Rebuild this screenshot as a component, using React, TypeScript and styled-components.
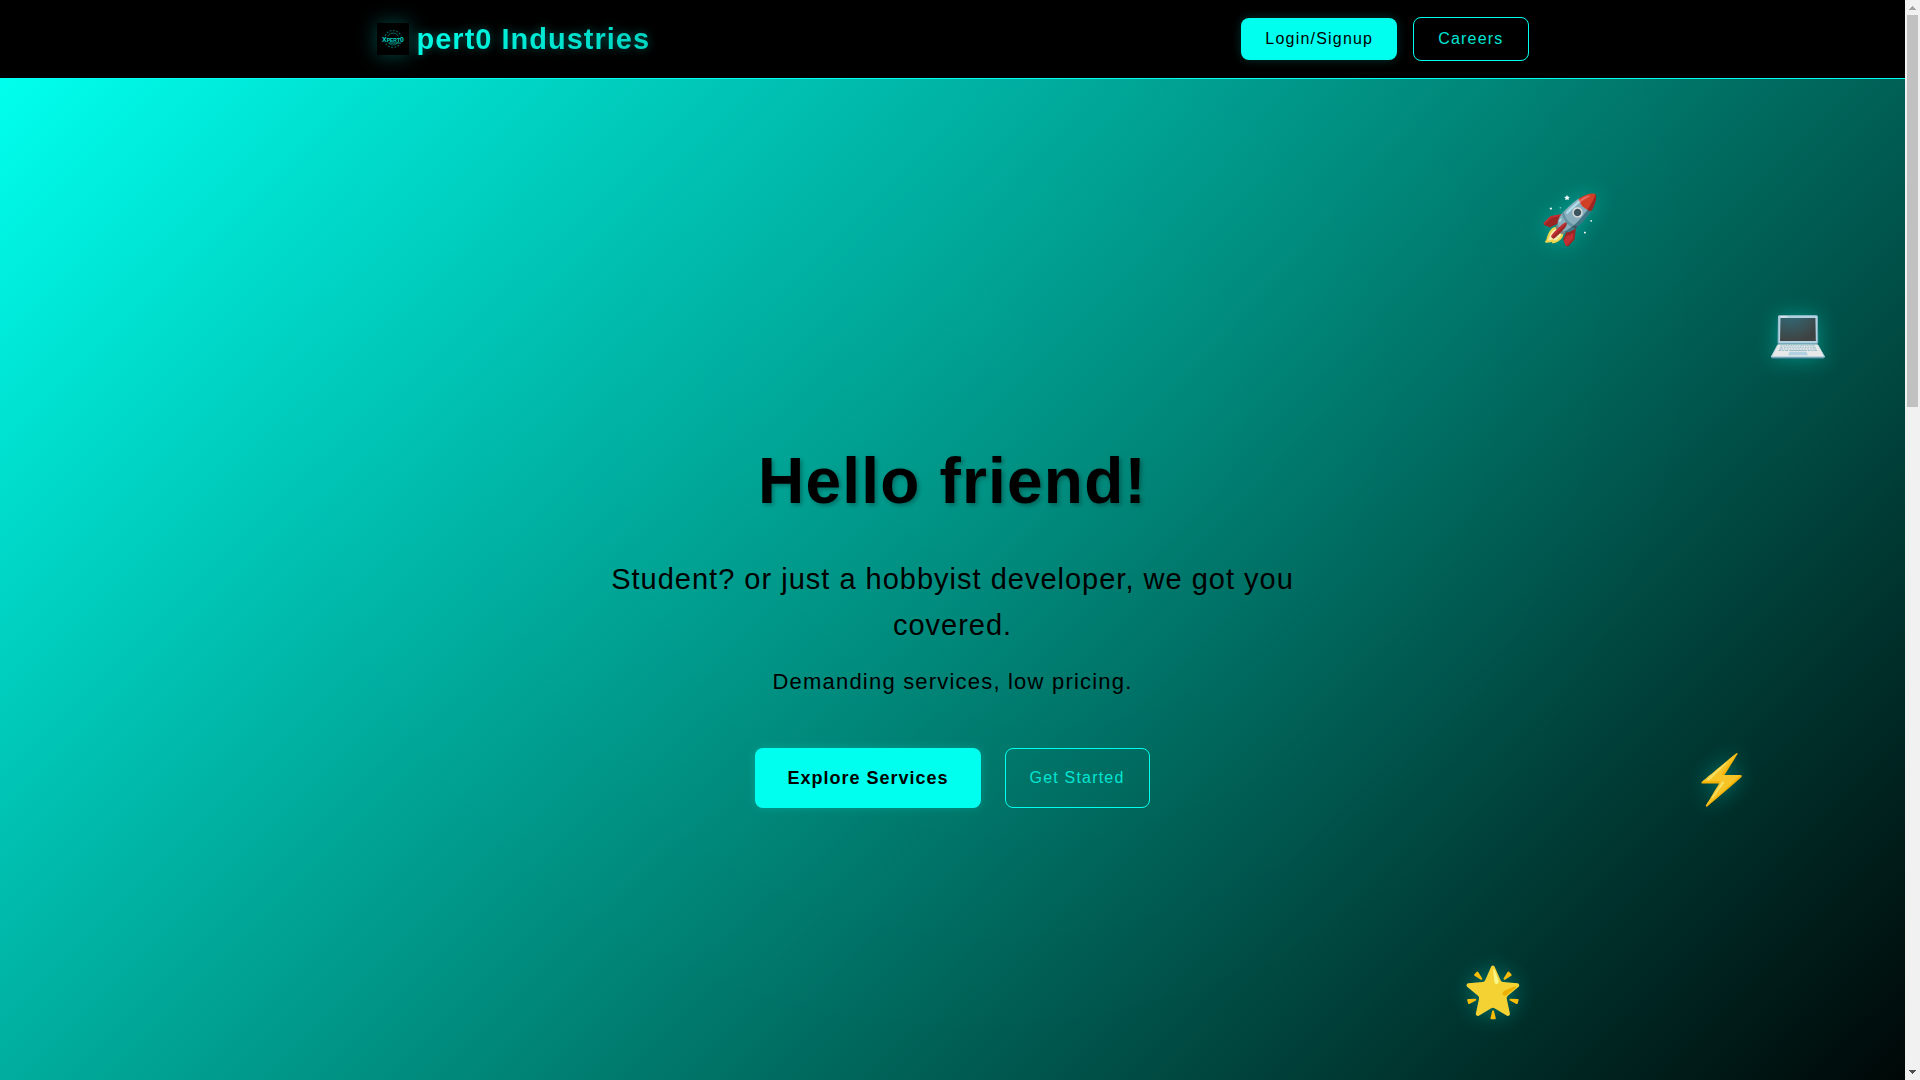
import React from "react";
import styled, { createGlobalStyle, css } from "styled-components";

const aqua = "#00ffee";
const sans = '"Liberation Sans", Arial, "Noto Color Emoji", sans-serif';

const GlobalStyle = createGlobalStyle`
  *, *::before, *::after { box-sizing: border-box; }
  body { margin: 0; background: #000; font-family: ${sans}; line-height: 1.6; letter-spacing: 0.075em; }
  h1, p { margin: 0; }
`;

const Shell = styled.div`
  display: grid;
  grid-template-columns: 1fr 15px;
  height: 100vh;
  overflow: hidden;
`;

const Page = styled.div`
  display: flex;
  flex-direction: column;
  min-width: 0;
  overflow: hidden;
`;

const Header = styled.header`
  flex: none;
  background: #000;
  border-bottom: 1px solid ${aqua};
`;

const HeaderInner = styled.div`
  display: flex;
  align-items: center;
  justify-content: space-between;
  max-width: 1200px;
  margin: 0 auto;
  padding: 16px 24px;
`;

const Brand = styled.a`
  display: flex;
  align-items: center;
  gap: 8px;
  font-size: 29px;
  line-height: 46px;
  font-weight: 700;
  letter-spacing: 1px;
  text-decoration: none;
`;

const BrandMark = styled.svg`
  display: block;
  width: 32px;
  height: 32px;
  background: #000;
  box-shadow: 0 0 20px rgba(0, 255, 238, 0.3);
`;

const BrandName = styled.span`
  color: transparent;
  background: linear-gradient(135deg, #00ffe8, #00d2c0);
  background-clip: text;
  -webkit-background-clip: text;
  filter: drop-shadow(0 0 5px rgba(0, 255, 238, 0.35));
`;

const Nav = styled.nav`
  display: flex;
  align-items: center;
  gap: 16px;
`;

const Button = styled.button<{ $kind: "solid" | "outline"; $large?: boolean }>`
  padding: 12px 24px;
  border: 0;
  border-radius: 8px;
  font-family: ${sans};
  font-size: 16px;
  line-height: 18px;
  letter-spacing: 0.075em;
  cursor: pointer;
  ${({ $kind }) =>
    $kind === "solid"
      ? css`
          background: ${aqua};
          color: #000;
          box-shadow: 0 0 10px rgba(0, 255, 238, 0.2);
        `
      : css`
          background: transparent;
          color: #00e5d4;
          border: 1px solid ${aqua};
        `}
  ${({ $large }) =>
    $large &&
    css`
      padding: 20px 32px;
      font-size: 18px;
      line-height: 20px;
      font-weight: 700;
      letter-spacing: 1px;
    `}
`;

const Hero = styled.main`
  position: relative;
  flex: none;
  display: flex;
  align-items: center;
  justify-content: center;
  min-height: 100vh;
  background:
    radial-gradient(circle at 50% 20%, rgba(0, 255, 238, 0.06) 0%, transparent 60%),
    linear-gradient(135deg, ${aqua} 0%, #008577 50%, #000 100%);
`;

const HeroContent = styled.div`
  max-width: 800px;
  text-align: center;
  color: #000;
`;

const Title = styled.h1`
  margin-bottom: 24px;
  font-size: 64px;
  line-height: 102px;
  text-shadow: 2px 2px 4px rgba(0, 0, 0, 0.3);
`;

const Lead = styled.p`
  margin-bottom: 16px;
  font-size: 29px;
  line-height: 46px;
  letter-spacing: 1px;
`;

const Tagline = styled.p`
  margin-bottom: 48px;
  font-size: 22px;
  line-height: 36px;
`;

const Actions = styled.div`
  display: flex;
  justify-content: center;
  gap: 24px;
`;

const FloatingLayer = styled.div`
  position: absolute;
  inset: 0 0 0 60%;
  pointer-events: none;
`;

const Floating = styled.span<{ $top: number; $right: number }>`
  position: absolute;
  top: ${({ $top }) => $top}%;
  right: ${({ $right }) => $right}%;
  font-size: 48px;
  line-height: 77px;
  opacity: 0.97;
  filter: drop-shadow(0 0 10px rgba(0, 255, 238, 0.35));
`;

const Scrollbar = styled.div`
  display: flex;
  flex-direction: column;
  align-items: center;
  background: #f1f1f1;
`;

const ScrollThumb = styled.div`
  flex: 0 0 36.3%;
  width: 11px;
  background: #c1c1c1;
`;

const ScrollTrack = styled.div`
  flex: 1;
`;

const Arrow = styled.svg`
  flex: none;
  display: block;
  width: 15px;
  height: 15px;
`;

const floats = [
  { glyph: "🚀", top: 9.4, right: 39.9 },
  { glyph: "💻", top: 19.9, right: 9.9 },
  { glyph: "⚡", top: 61.3, right: 19.9 },
  { glyph: "🌟", top: 80.9, right: 50 },
];

function Logo() {
  return (
    <BrandMark viewBox="0 0 32 32" aria-hidden="true">
      <g fill="none" stroke="#00a99d">
        <circle cx="16" cy="16" r="8.5" strokeWidth="1.4" strokeDasharray="2 1.3" opacity="0.5" />
        <circle cx="16" cy="16" r="6" strokeWidth="1" opacity="0.6" />
      </g>
      <rect x="5" y="13" width="22" height="6" fill="#000" opacity="0.7" />
      <text
        x="16"
        y="18.5"
        textAnchor="middle"
        fontFamily="Liberation Sans, sans-serif"
        fontWeight="700"
        letterSpacing="0"
        fill="#00d8ca"
      >
        <tspan fontSize="7">X</tspan>
        <tspan fontSize="5">PERT</tspan>
        <tspan fontSize="7">0</tspan>
      </text>
      <path d="M12 20h11" stroke="#00c9bb" strokeWidth="1" opacity="0.8" />
    </BrandMark>
  );
}

export default function App() {
  return (
    <>
      <GlobalStyle />
      <Shell>
        <Page>
          <Header>
            <HeaderInner>
              <Brand href="#">
                <Logo />
                <BrandName>pert0 Industries</BrandName>
              </Brand>
              <Nav>
                <Button $kind="solid">Login/Signup</Button>
                <Button $kind="outline">Careers</Button>
              </Nav>
            </HeaderInner>
          </Header>
          <Hero>
            <HeroContent>
              <Title>Hello friend!</Title>
              <Lead>Student? or just a hobbyist developer, we got you covered.</Lead>
              <Tagline>Demanding services, low pricing.</Tagline>
              <Actions>
                <Button $kind="solid" $large>
                  Explore Services
                </Button>
                <Button $kind="outline">Get Started</Button>
              </Actions>
            </HeroContent>
            <FloatingLayer aria-hidden="true">
              {floats.map((f) => (
                <Floating key={f.glyph} $top={f.top} $right={f.right}>
                  {f.glyph}
                </Floating>
              ))}
            </FloatingLayer>
          </Hero>
        </Page>
        <Scrollbar aria-hidden="true">
          <Arrow viewBox="0 0 15 15" shapeRendering="crispEdges">
            <path d="M7 6h1v1h1v1h1v1h1v1H4V9h1V8h1V7h1z" fill="#a3a3a3" />
          </Arrow>
          <ScrollThumb />
          <ScrollTrack />
          <Arrow viewBox="0 0 15 15" shapeRendering="crispEdges">
            <path d="M4 5h7v1h-1v1H9v1H8v1H7V8H6V7H5V6H4z" fill="#505050" />
          </Arrow>
        </Scrollbar>
      </Shell>
    </>
  );
}
